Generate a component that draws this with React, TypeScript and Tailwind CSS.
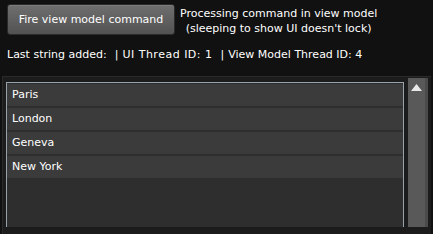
export default function App() {
  const items = ["Paris", "London", "Geneva", "New York"];
  return (
    <div
      className="w-[433px] h-[234px] overflow-hidden bg-[#111111] text-white text-[11px]"
      style={{ fontFamily: "'DejaVu Sans', Verdana, sans-serif" }}
    >
      <div className="flex items-start pt-[4px] pl-[7px] h-[39px]">
        <button className="w-[168px] h-[31px] rounded-[3px] border border-[#2b2b2b] bg-gradient-to-b from-[#6f6f6f] to-[#525252] text-white text-[11px] leading-none shadow-[inset_0_1px_0_#7c7c7c]">
          Fire view model command
        </button>
        <div className="ml-[5px] pt-[2px] text-center leading-[15px]">
          <div>Processing command in view model</div>
          <div>(sleeping to show UI doesn't lock)</div>
        </div>
      </div>
      <div className="pl-[7px] mt-[8px] leading-[15px] h-[15px] flex whitespace-pre">
        <span>Last string added:</span>
        <span className="ml-[8px]">|</span>
        <span className="ml-[4px] tracking-[0.5px]">UI Thread ID: 1</span>
        <span className="ml-[8px]">|</span>
        <span className="ml-[4px]">View Model Thread ID: 4</span>
      </div>
      <div className="ml-[2px] mr-[2px] mt-[14px] h-[160px] border-l border-t border-[#2a2a2a] bg-[#1c1c1c] flex">
        <div className="ml-[3px] mt-[5px] w-[398px] h-[145px] border-l border-t border-r border-[#97a2ab] bg-[#2e2e2e] pt-[1px] flex flex-col gap-[2px]">
          {items.map((it) => (
            <div key={it} className="h-[22px] bg-[#3b3b3b] pl-[5px] flex items-center">
              {it}
            </div>
          ))}
        </div>
        <div className="ml-[4px] mt-[1px] w-[20px] h-[149px] bg-[#595959] border-r-[3px] border-[#4b4b4b] flex justify-center pt-[6px]">
          <svg width="11" height="7" viewBox="0 0 11 7">
            <polygon points="5.5,0 11,7 0,7" fill="#e8e8e8" />
          </svg>
        </div>
      </div>
    </div>
  );
}
